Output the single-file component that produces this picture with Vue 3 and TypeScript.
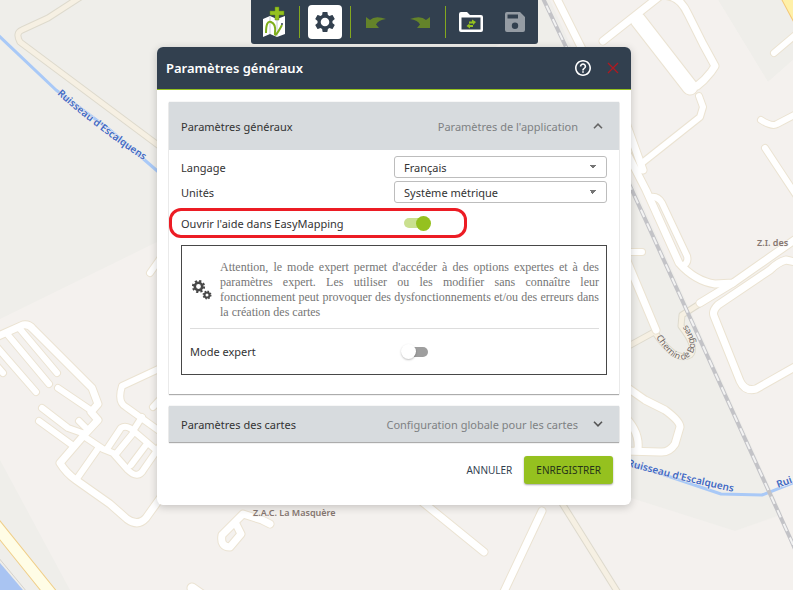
<template>
  <main class="page">
    <svg class="map" viewBox="0 0 793 590" preserveAspectRatio="xMidYMin slice" aria-label="Carte">
      <rect width="793" height="590" fill="#efeeea" />
      <path d="M0 319 157 242 400 130 550 0H718L768 82 793 60V511L735 531 631 498 500 470 500 590H70L0 460Z" fill="#f4f1ee" />
      <path d="M560 0 800 540 791 511 735 531 631 498 500 450V0Z" fill="#efeeea" />
      <path d="M550 0H718L768 82 793 60V538Z" fill="#f4f1ee" />
      <path d="M631 498 735 531 793 511V590H400V440Z" fill="#f4f1ee" />
      <path d="M0 563 23 590H0Z" fill="#a9c4f2" />
      <path d="M-2 557 27 592" stroke="#d5d2cc" fill="none" />
      <g fill="none" stroke-linejoin="round" stroke-linecap="round">
        <path v-for="(r, i) in lanes" :key="'lc' + i" :d="r" stroke="#dedacd" stroke-width="7" />
        <path v-for="(r, i) in lanes" :key="'lf' + i" :d="r" stroke="#f6f0e3" stroke-width="5" />
        <path v-for="(r, i) in rivers" :key="'rv' + i" :d="r" stroke="#a9c9f7" stroke-width="3" />
        <path v-for="(r, i) in streets" :key="'sc' + i" :d="r.d" stroke="#ebe3d2" :stroke-width="r.w + 2" />
        <path v-for="(r, i) in streets" :key="'sf' + i" :d="r.d" stroke="#ffffff" :stroke-width="r.w" />
        <path d="M-6 523 56 600" stroke="#f0cf8a" stroke-width="13" />
        <path d="M-6 523 56 600" stroke="#fffde6" stroke-width="11" />
        <path d="M785-6 800 22" stroke="#f5c878" stroke-width="12" />
        <path d="M785-6 800 22" stroke="#fff0a8" stroke-width="10" />
      </g>
      <g fill="none">
        <path :d="rail" stroke="#c3c3c7" stroke-width="4" />
        <path :d="rail" stroke="#f2f2f2" stroke-width="2" stroke-dasharray="8 7" />
      </g>
      <path id="river-west" d="M57 94Q104 136 165 174" fill="none" />
      <path id="river-east" d="M627 466 680 480 760 498" fill="none" />
      <path id="lane-label" d="M656 337Q677 371 692 354 701 343 682 318" fill="none" />
      <g class="labels">
        <text class="water"><textPath href="#river-west">Ruisseau d'Escalquens</textPath></text>
        <text class="water"><textPath href="#river-east">Ruisseau d'Escalquens</textPath></text>
        <text class="water" transform="translate(778 488) rotate(-20)">Rui</text>
        <text class="lane"><textPath href="#lane-label">Chemin de Bogues</textPath></text>
        <text class="area" x="253" y="516">Z.A.C. La Masquère</text>
        <text class="area" x="757" y="246">Z.I. des</text>
      </g>
    </svg>

    <nav class="toolbar" aria-label="Outils">
      <button type="button" class="tool" aria-label="Nouvelle carte">
        <svg width="24" height="32" viewBox="0 0 24 32">
          <path d="M1 13 8 10 15 13 23 10V28L15 31 8 28 1 31Z" fill="#fff" />
          <path d="M8 11V28M15 13V31" stroke="#c5cbd1" fill="none" />
          <path d="M4 27Q4 14 9 16T13 26 20 19" stroke="#7fae1c" stroke-width="2" fill="none" />
          <circle cx="20" cy="18" r="1" fill="#32404f" />
          <path d="M13 1h4v4h5v4h-5v5h-4V9H8V5h5Z" fill="#95c11f" stroke="#5f8a12" stroke-width=".5" />
        </svg>
      </button>
      <span class="rule"></span>
      <button type="button" class="tool active" aria-label="Paramètres">
        <svg width="24" height="24" viewBox="0 0 24 24"><path :d="gear" fill="#32404f" fill-rule="evenodd" /></svg>
      </button>
      <span class="rule"></span>
      <button type="button" class="tool" aria-label="Annuler">
        <svg width="22" height="14" viewBox="0 0 22 14"><path :d="arrow" fill="#64832a" /></svg>
      </button>
      <button type="button" class="tool" aria-label="Rétablir">
        <svg width="22" height="14" viewBox="0 0 22 14"><path :d="arrow" fill="#64832a" transform="matrix(-1 0 0 1 22 0)" /></svg>
      </button>
      <span class="rule"></span>
      <button type="button" class="tool" aria-label="Ouvrir un projet">
        <svg width="24" height="20" viewBox="0 0 24 20">
          <path d="M0 2Q0 0 2 0H8L11 3H22Q24 3 24 5V18Q24 20 22 20H2Q0 20 0 18ZM2.500 5.500V17.500H21.500V5.500Z" fill="#fff" fill-rule="evenodd" />
          <path d="M10 9.500h3V7.500L17 10 14 13V11.500H10ZM14 13v2h-3V16.500L7.500 14 10.500 11.500V13Z" fill="#95c11f" />
        </svg>
      </button>
      <button type="button" class="tool" aria-label="Enregistrer le projet" disabled>
        <svg width="20" height="20" viewBox="0 0 20 20"><path d="M2 0H15L20 5V18Q20 20 18 20H2Q0 20 0 18V2Q0 0 2 0ZM2.500 2.500V6.500H13V2.500ZM10 10.500A3.200 3.200 0 1 0 10 16.900 3.200 3.200 0 1 0 10 10.500Z" fill="#959ca4" fill-rule="evenodd" /></svg>
      </button>
    </nav>

    <section class="dialog" role="dialog" aria-labelledby="dialog-title">
      <header class="dialog-head">
        <h1 id="dialog-title">Paramètres généraux</h1>
        <button type="button" class="plain" aria-label="Aide">
          <svg width="16" height="16" viewBox="2 2 20 20"><path fill="#fff" d="M11 18h2v-2h-2v2zm1-16C6.480 2 2 6.480 2 12s4.480 10 10 10 10-4.480 10-10S17.520 2 12 2zm0 18c-4.410 0-8-3.590-8-8s3.590-8 8-8 8 3.590 8 8-3.590 8-8 8zm0-14c-2.210 0-4 1.790-4 4h2c0-1.100.9-2 2-2s2 .9 2 2c0 2-3 1.750-3 5h2c0-2.250 3-2.500 3-5 0-2.210-1.790-4-4-4z" /></svg>
        </button>
        <button type="button" class="plain" aria-label="Fermer">
          <svg width="18" height="18" viewBox="0 0 18 18"><path d="M4 4 14 14M14 4 4 14" stroke="#b01820" stroke-width="1.300" fill="none" /></svg>
        </button>
      </header>

      <div class="dialog-body">
        <section class="panel">
          <button type="button" class="panel-head open" :aria-expanded="true">
            <span>Paramètres généraux</span>
            <span class="hint">Paramètres de l'application</span>
            <svg width="10" height="6" viewBox="0 0 10 6"><path d="M1 5.200 5 1.200 9 5.200" fill="none" stroke="#666" stroke-width="1.600" /></svg>
          </button>
          <div class="panel-body">
            <div class="row">
              <label for="language">Langage</label>
              <select id="language" v-model="language">
                <option>Français</option>
                <option>English</option>
              </select>
            </div>
            <div class="row">
              <label for="units">Unités</label>
              <select id="units" v-model="units">
                <option>Système métrique</option>
                <option>Système impérial</option>
              </select>
            </div>
            <div class="row marked">
              <label for="help">Ouvrir l'aide dans EasyMapping</label>
              <input id="help" v-model="openHelp" type="checkbox" class="switch" />
            </div>
            <div class="expert">
              <div class="notice">
                <svg width="20" height="20" viewBox="0 0 20 20">
                  <g fill="none" stroke="#484848">
                    <circle cx="6.500" cy="6.500" r="3.700" stroke-width="2.600" />
                    <circle cx="6.500" cy="6.500" r="5.600" stroke-width="2" stroke-dasharray="2.200 2.200" />
                    <circle cx="15" cy="15" r="2.500" stroke-width="2" />
                    <circle cx="15" cy="15" r="3.800" stroke-width="1.400" stroke-dasharray="1.500 1.500" />
                  </g>
                </svg>
                <p>Attention, le mode expert permet d'accéder à des options expertes et à des paramètres expert. Les utiliser ou les modifier sans connaître leur fonctionnement peut provoquer des dysfonctionnements et/ou des erreurs dans la création des cartes</p>
              </div>
              <div class="row mode">
                <label for="expert">Mode expert</label>
                <input id="expert" v-model="expert" type="checkbox" class="switch" />
              </div>
            </div>
          </div>
        </section>

        <section class="panel">
          <button type="button" class="panel-head" :aria-expanded="false">
            <span>Paramètres des cartes</span>
            <span class="hint">Configuration globale pour les cartes</span>
            <svg width="10" height="6" viewBox="0 0 10 6"><path d="M1 .8 5 4.800 9 .8" fill="none" stroke="#555" stroke-width="1.600" /></svg>
          </button>
        </section>

        <footer class="actions">
          <button type="button" class="cancel">ANNULER</button>
          <button type="button" class="save">ENREGISTRER</button>
        </footer>
      </div>
    </section>
  </main>
</template>

<script setup lang="ts">
import { ref } from 'vue'

interface Street {
  d: string
  w: number
}

const language = ref<string>('Français')
const units = ref<string>('Système métrique')
const openHelp = ref<boolean>(true)
const expert = ref<boolean>(false)

const gear =
  'M19.430 12.980c.04-.32.07-.64.07-.98s-.03-.66-.07-.98l2.110-1.650c.19-.15.24-.42.12-.64l-2-3.460c-.12-.22-.39-.3-.61-.22l-2.490 1c-.52-.4-1.080-.73-1.690-.98l-.38-2.650C14.460 2.180 14.250 2 14 2h-4c-.25 0-.46.18-.49.42l-.38 2.650c-.61.25-1.170.59-1.690.98l-2.490-1c-.23-.09-.49 0-.61.22l-2 3.460c-.13.22-.07.49.12.64l2.110 1.650c-.04.32-.07.65-.07.98s.03.66.07.98l-2.110 1.650c-.19.15-.24.42-.12.64l2 3.460c.12.22.39.3.61.22l2.490-1c.52.4 1.080.73 1.690.98l.38 2.650c.03.24.24.42.49.42h4c.25 0 .46-.18.49-.42l.38-2.650c.61-.25 1.170-.59 1.690-.98l2.490 1c.23.09.49 0 .61-.22l2-3.460c.12-.22.07-.49-.12-.64l-2.110-1.650zM12 16.300a4.300 4.300 0 1 1 0-8.600 4.300 4.300 0 0 1 0 8.600z'

const arrow = 'M1 2 5 5Q10 0 21 4 13 5 11 9.500L14 13H1Z'

const rail = 'M540-8 566 47 631 188 682 300 791 540 812 588'

const rivers: string[] = ['M-3 34 56 90 110 130 170 182', 'M620 460 721 494 762 495 800 480']

const lanes: string[] = [
  'M82-4 48 18 22 30Q15 33 20 42L170 154',
  'M704 301 682 315 681 326Q698 348 690 355 676 363 656 334',
  'M656 331 625 348',
  'M560 500 620 596',
]

const streets: Street[] = [
  { w: 7, d: 'M-4 337 23 325Q29 324 33 329L92 388 98 404 91 412 98 420 85 434 60 463Q66 473 76 480L110 504 127 519Q138 527 146 518L166 490' },
  { w: 6, d: 'M20 329 57 373M8 335 49 384M-4 346 36 392M-5 364 3 373M58 388 92 411M42 408 68 428 85 434M39 421 72 445M79 421 88 430' },
  { w: 6, d: 'M76 480 97 450M85 437 103 449 113 453 128 470Q138 480 144 469L160 446M107 449 121 428Q127 424 136 433L156 450M116 454 134 432M131 465 146 445M133 431 142 417' },
  { w: 6, d: 'M165 366 122 386Q117 402 126 407L165 435M165 394 153 407M150 273 162 256' },
  { w: 7, d: 'M270 524 262 520 243 514 222 535Q220 547 230 547L241 534 236 524' },
  { w: 9, d: 'M192 588 212 602' },
  { w: 7, d: 'M555-5 585 55M625 120 643 170M628 155 646 190 679 263Q695 281 715 284L733 283 800 236' },
  { w: 6, d: 'M642 163 700 117 703 107 699 96M651 197Q658 196 662 203L687 256Q689 263 682 266' },
  { w: 15, d: 'M638 20 690 87' },
  { w: 7, d: 'M603 41 660-4M668-4Q680-3 688 14L703 44 715 66 711 72 704 80 697 86' },
  { w: 6, d: 'M774 53 800 31M761 120Q772 127 777 124L800 112M765 148 800 201M625 252 642 252' },
  { w: 7, d: 'M625 256 656 330M700 303 733 283M800 263 786 260Q778 262 770 270L718 305Q712 311 714 316L740 381Q745 392 756 389L800 364' },
  { w: 7, d: 'M625 386 645 400 665 410Q680 421 680 427L675 444Q669 453 660 452L625 451M625 417Q640 432 638 450' },
  { w: 7, d: 'M542 511 500 600M420 500 484 552' },
]
</script>

<style>
body {
  margin: 0;
}
</style>

<style scoped>
.page {
  position: relative;
  display: flex;
  flex-direction: column;
  align-items: center;
  gap: 3px;
  box-sizing: border-box;
  min-height: 100vh;
  padding-right: 5px;
  overflow: hidden;
  color: #333;
  font-family: "Noto Sans", "Open Sans", sans-serif;
  font-size: 11px;
}
.page * {
  box-sizing: border-box;
}
.map {
  position: absolute;
  inset: 0;
  width: 100%;
  height: 100%;
}
.labels text {
  paint-order: stroke;
  stroke: #f4f1ee;
  stroke-width: 1px;
  font-family: "Noto Sans", "Open Sans", sans-serif;
}
.labels .water {
  fill: #4169c4;
  font-size: 10px;
  font-weight: 600;
}
.labels .lane {
  fill: #6f675f;
  font-size: 9px;
}
.labels .area {
  fill: #857670;
  font-size: 9px;
  font-weight: 600;
}
button,
select {
  color: inherit;
  font: inherit;
}
button {
  padding: 0;
  border: 0;
  background: none;
}
svg {
  display: block;
}
.toolbar {
  position: relative;
  display: flex;
  align-items: center;
  gap: 8px;
  height: 44px;
  padding: 0 6px;
  border-radius: 0 0 3px 3px;
  background: #32404f;
}
.tool {
  display: grid;
  place-items: center;
  width: 34px;
  height: 34px;
  border-radius: 4px;
}
.tool + .tool {
  margin-left: 2px;
}
.tool.active {
  background: #fff;
}
.rule {
  width: 1px;
  height: 32px;
  background: #84a81f;
}
.dialog {
  position: relative;
  width: 474px;
  max-width: 100%;
  border-radius: 6px;
  background: #fff;
  box-shadow: 0 2px 8px rgba(0, 0, 0, 0.2);
}
.dialog-head {
  display: flex;
  align-items: center;
  gap: 13px;
  height: 43px;
  padding: 0 9px;
  border-bottom: 1px solid #95c11f;
  border-radius: 6px 6px 0 0;
  background: #32404f;
}
h1 {
  flex: 1;
  margin: 0;
  color: #fff;
  font-size: 13px;
  font-weight: 600;
}
.dialog-body {
  display: flex;
  flex-direction: column;
  gap: 12px;
  padding: 12px 12px 21px;
}
.panel {
  background: #fff;
  box-shadow: 0 1px 1px rgba(0, 0, 0, 0.3), 0 0 1px rgba(0, 0, 0, 0.2);
}
.panel-head {
  display: flex;
  align-items: center;
  gap: 15px;
  width: 100%;
  height: 36px;
  padding: 0 16px 0 12px;
  background: #d7dbde;
  text-align: left;
}
.panel-head.open {
  height: 48px;
}
.hint {
  flex: 1;
  color: #7e8183;
  text-align: right;
}
.panel-body {
  display: flex;
  flex-direction: column;
  gap: 3px;
  padding: 6px 12px 19px;
}
.row {
  display: flex;
  align-items: center;
}
.row label {
  flex: 1;
}
.row select {
  width: 50%;
  height: 22px;
  padding: 0 9px;
  border: 1px solid #bdbdbd;
  border-radius: 3px;
  appearance: none;
  background-color: #fff;
  background-image:
    linear-gradient(45deg, transparent 50%, #757575 50%),
    linear-gradient(135deg, #757575 50%, transparent 50%);
  background-position: right 13px center, right 9px center;
  background-repeat: no-repeat;
  background-size: 4px 4px;
}
.row.marked {
  width: 298px;
  height: 30px;
  margin: 2px 0 4px -12px;
  padding: 0 33px 0 9px;
  border: 3px solid #ec1c24;
  border-radius: 12px;
}
.switch {
  display: grid;
  grid-template-areas: "stack";
  align-items: center;
  width: 28px;
  height: 16px;
  margin: 0;
  appearance: none;
}
.switch::before,
.switch::after {
  grid-area: stack;
  content: "";
}
.switch::before {
  justify-self: center;
  width: 26px;
  height: 10px;
  border-radius: 5px;
  background: #9e9e9e;
}
.switch::after {
  width: 15px;
  height: 15px;
  border-radius: 50%;
  background: #fff;
  box-shadow: 0 1px 2px rgba(0, 0, 0, 0.25);
}
.switch:checked::before {
  background: #cae08f;
}
.switch:checked::after {
  justify-self: end;
  background: #95c11f;
  box-shadow: none;
}
.expert {
  padding: 14px 7px 0 8px;
  border: 1px solid #484848;
}
.notice {
  display: flex;
  align-items: center;
  gap: 8px;
  padding-bottom: 8px;
  border-bottom: 1px solid #ddd;
}
.notice svg {
  flex: none;
  margin-left: 2px;
}
.notice p {
  margin: 0;
  color: #757575;
  font-family: "Liberation Serif", serif;
  font-size: 12px;
  line-height: 15px;
  text-align: justify;
}
.mode {
  height: 45px;
}
.mode .switch {
  margin-right: 170px;
}
.actions {
  display: flex;
  justify-content: flex-end;
  align-items: center;
  gap: 12px;
  padding: 2px 6px 0 0;
  font-size: 10px;
}
.cancel {
  color: #32404f;
}
.save {
  height: 28px;
  padding: 0 12px;
  border-radius: 3px;
  background: #95c11f;
  color: #26331a;
  box-shadow: 0 1px 2px rgba(0, 0, 0, 0.35);
}
</style>
